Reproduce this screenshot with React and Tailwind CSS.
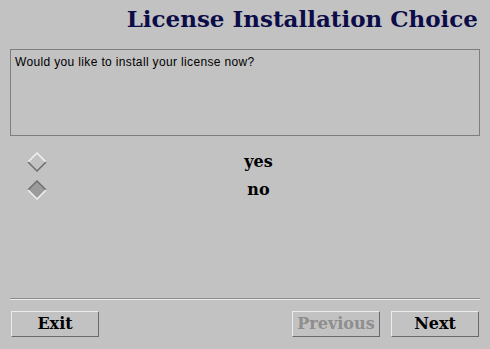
import React, { useState } from 'react';

const serif = "font-['DejaVu_Serif','Liberation_Serif',serif]";

// Motif-style diamond radio
const Diamond = ({ checked }) => (
  <svg width="20" height="20" viewBox="0 0 20 20" className="shrink-0">
    <polygon points="10,1 19,10 10,19 1,10" fill={checked ? '#9c9c9c' : '#c2c2c2'} />
    <polyline points="1,10 10,1 19,10" fill="none" stroke={checked ? '#6e6e6e' : '#f0f0f0'} strokeWidth="1.5" />
    <polyline points="1,10 10,19 19,10" fill="none" stroke={checked ? '#f0f0f0' : '#6e6e6e'} strokeWidth="1.5" />
  </svg>
);

const Button = ({ children, disabled }) => (
  <button
    className={`w-[88px] h-[26px] border border-t-[#ececec] border-l-[#ececec] border-b-[#6a6a6a] border-r-[#6a6a6a] bg-[#c2c2c2] text-[16px] font-bold ${serif} ${disabled ? 'text-[#8e8e8e]' : 'text-black'}`}
  >
    {children}
  </button>
);

export default function App() {
  const [choice, setChoice] = useState('no');

  return (
    <div className="w-[490px] h-[349px] bg-[#c2c2c2] flex flex-col overflow-hidden">
      {/* Title */}
      <div className="flex justify-end pr-[12px] pt-[4px] h-[49px]">
        <h1 className={`${serif} font-bold text-[23px] leading-[30px] text-[#0c0c48]`}>
          License Installation Choice
        </h1>
      </div>

      {/* Message box */}
      <div className="mx-[10px] h-[87px] border border-[#7e7e7e] px-[4px] pt-[5px]">
        <p className="font-['Liberation_Sans',Arial,sans-serif] text-[12px] tracking-[0.35px] leading-[14px] text-black">
          Would you like to install your license now?
        </p>
      </div>

      {/* Choices */}
      <div className="flex flex-col gap-[8px] pl-[27px] pr-[20px] pt-[16px]">
        {['yes', 'no'].map((opt) => (
          <div key={opt} className="flex items-center h-[20px] cursor-pointer" onClick={() => setChoice(opt)}>
            <Diamond checked={choice === opt} />
            <span className={`flex-1 text-center ${serif} font-bold text-[16px] text-black`}>{opt}</span>
          </div>
        ))}
      </div>

      <div className="flex-1" />

      {/* Separator */}
      <div className="mx-[10px] border-t border-t-[#8c8c8c] border-b border-b-[#ececec]" />

      {/* Buttons */}
      <div className="flex items-center px-[11px] pt-[11px] pb-[12px]">
        <Button>Exit</Button>
        <div className="flex-1" />
        <Button disabled>Previous</Button>
        <div className="w-[11px]" />
        <Button>Next</Button>
      </div>
    </div>
  );
}
